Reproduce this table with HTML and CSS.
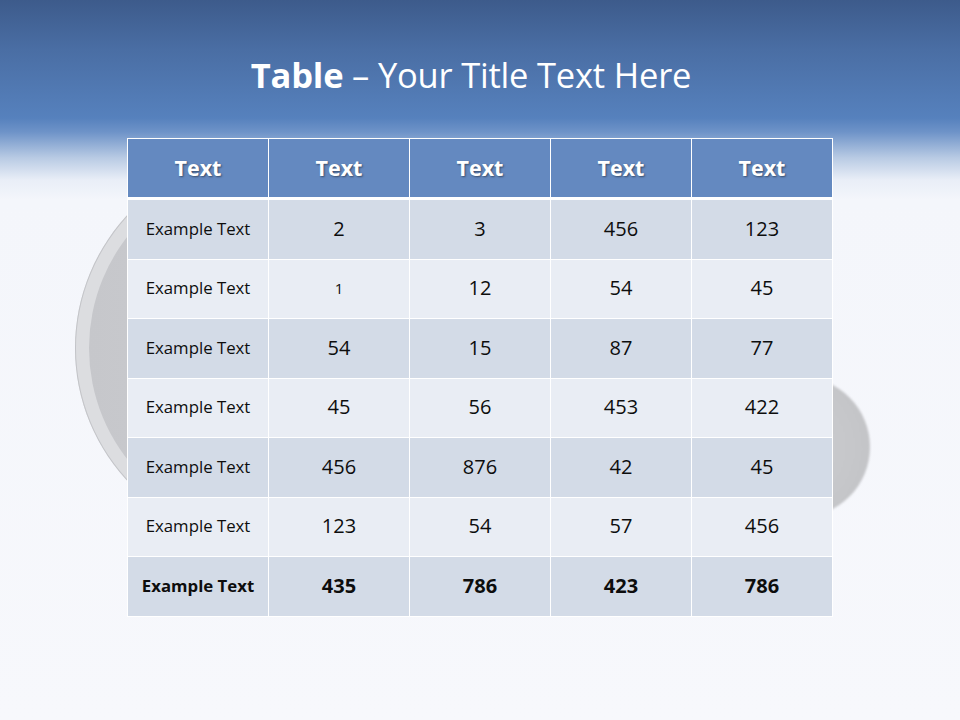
FILE: index.html
```html
<!DOCTYPE html>
<html>
<head>
<meta charset="utf-8">
<link rel="stylesheet" href="styles.css">
</head>
<body>
<div class="slide">
  <div class="disc disc-left"><div class="disc-inner"></div></div>
  <div class="disc disc-right"></div>
  <h1 class="title"><b>Table</b> – Your Title Text Here</h1>
  <div class="table">
    <div class="row head">
      <div class="cell">Text</div><div class="cell">Text</div><div class="cell">Text</div><div class="cell">Text</div><div class="cell">Text</div>
    </div>
    <div class="row odd">
      <div class="cell label">Example Text</div><div class="cell">2</div><div class="cell">3</div><div class="cell">456</div><div class="cell">123</div>
    </div>
    <div class="row even">
      <div class="cell label">Example Text</div><div class="cell small">1</div><div class="cell">12</div><div class="cell">54</div><div class="cell">45</div>
    </div>
    <div class="row odd">
      <div class="cell label">Example Text</div><div class="cell">54</div><div class="cell">15</div><div class="cell">87</div><div class="cell">77</div>
    </div>
    <div class="row even">
      <div class="cell label">Example Text</div><div class="cell">45</div><div class="cell">56</div><div class="cell">453</div><div class="cell">422</div>
    </div>
    <div class="row odd">
      <div class="cell label">Example Text</div><div class="cell">456</div><div class="cell">876</div><div class="cell">42</div><div class="cell">45</div>
    </div>
    <div class="row even">
      <div class="cell label">Example Text</div><div class="cell">123</div><div class="cell">54</div><div class="cell">57</div><div class="cell">456</div>
    </div>
    <div class="row odd total">
      <div class="cell label">Example Text</div><div class="cell">435</div><div class="cell">786</div><div class="cell">423</div><div class="cell">786</div>
    </div>
  </div>
</div>
</body>
</html>
```

FILE: styles.css
```css
html, body {
  margin: 0;
  padding: 0;
}
body {
  width: 960px;
  height: 720px;
  overflow: hidden;
}
.slide {
  position: relative;
  width: 960px;
  height: 720px;
  overflow: hidden;
  font-family: "Open Sans", "DejaVu Sans", sans-serif;
  background: linear-gradient(to bottom,
    #3d5b8b 0px,
    #4a6ea4 50px,
    #5681bd 118px,
    #6e93c8 132px,
    #b9cbe4 158px,
    #e9eef7 180px,
    #f4f6fb 200px,
    #f7f8fc 720px);
  display: flex;
  flex-direction: column;
  align-items: center;
}
.disc {
  position: absolute;
  border-radius: 50%;
}
.disc-left {
  left: 75px;
  top: 153px;
  width: 390px;
  height: 390px;
  background: #dcdde0;
  box-shadow: inset 0 0 0 1px #c3c4c8;
}
.disc-inner {
  position: absolute;
  left: 14px;
  top: 14px;
  right: 14px;
  bottom: 14px;
  border-radius: 50%;
  background: linear-gradient(to right, #c6c7cb, #cfd0d4);
}
.disc-right {
  left: 730px;
  top: 377px;
  width: 140px;
  height: 140px;
  background: radial-gradient(circle at 40% 50%, #cdced1 0%, #c6c7ca 60%, #c0c1c4 100%);
  filter: blur(1px);
}
.title {
  position: relative;
  margin: 0 18px 0 0;
  padding-top: 53px;
  height: 86px;
  box-sizing: border-box;
  font-size: 34.5px;
  line-height: 44px;
  font-weight: 400;
  color: #ffffff;
  letter-spacing: -0.2px;
  white-space: nowrap;
}
.title b {
  font-weight: 700;
}
.table {
  position: relative;
  margin-top: 52px;
  width: 704px;
  border: 1px solid #ffffff;
  background: #ffffff;
  display: flex;
  flex-direction: column;
  gap: 1px;
}
.row {
  display: grid;
  grid-template-columns: repeat(5, 1fr);
  gap: 1px;
  height: 58.5px;
}
.row.head {
  height: 58px;
  margin-bottom: 2px;
}
.cell {
  display: flex;
  align-items: center;
  justify-content: center;
  font-size: 20px;
  color: #0d0d0d;
  padding-bottom: 2px;
  box-sizing: border-box;
}
.head .cell {
  background: #6489c0;
  color: #ffffff;
  font-weight: 700;
  font-size: 21.5px;
  text-shadow: 1px 1px 2px rgba(0, 0, 0, 0.45);
}
.odd .cell {
  background: #d3dbe7;
}
.even .cell {
  background: #e9edf4;
}
.cell.label {
  font-size: 16.8px;
}
.cell.small {
  font-size: 15px;
}
.total .cell {
  font-weight: 700;
}
```
